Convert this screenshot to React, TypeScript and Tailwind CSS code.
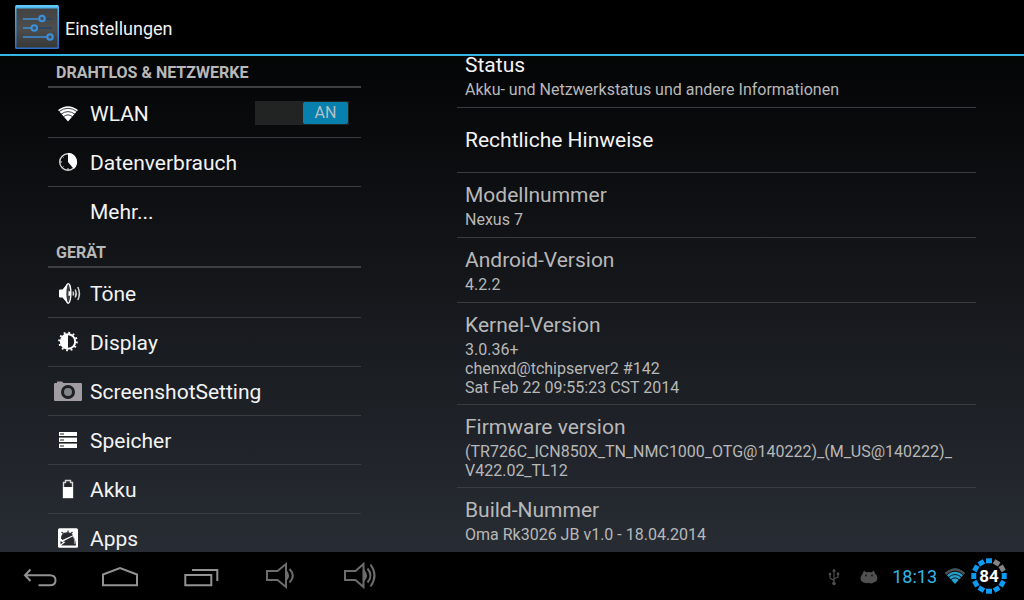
import { useState, type ReactNode } from "react";

type NavItem = {
  label: string;
  icon?: ReactNode;
  toggle?: boolean;
};

type NavSection = {
  title: string;
  items: NavItem[];
};

type InfoItem = {
  title: string;
  lines: string[];
  enabled?: boolean;
};

function WifiIcon() {
  return (
    <svg viewBox="0 0 28 28" className="h-7 w-7 shrink-0" aria-hidden="true">
      <path d="M4 11 Q14 3.4 24 11 L14 22.5Z" fill="#fff" />
      <g fill="none" stroke="#0a0b0d" strokeWidth="0.8">
        <path d="M5 12.6 Q14 6 23 12.6" />
        <path d="M7 15.2 Q14 10 21 15.2" />
        <path d="M9.5 17.7 Q14 14 18.5 17.7" />
      </g>
    </svg>
  );
}

function DataIcon() {
  return (
    <svg viewBox="0 0 28 28" className="h-7 w-7 shrink-0" aria-hidden="true">
      <circle cx="14" cy="14" r="8.3" fill="none" stroke="#d5d5d5" strokeWidth="1.4" />
      <path d="M14 14 V5 A9 9 0 0 1 19.8 20.9Z" fill="#fff" />
      <path d="M6 14h2M14 22v-2M8.3 8.3l1.2 1.2M8.3 19.7l1.2-1.2" stroke="#d5d5d5" strokeWidth="1" />
    </svg>
  );
}

function SoundIcon() {
  return (
    <svg viewBox="0 0 28 28" className="h-7 w-7 shrink-0" aria-hidden="true">
      <path d="M5 11.5 Q5 10.5 6 10.5 H8.5 L13.5 4.5 V24.5 L8.5 18.5 H6 Q5 18.5 5 17.5Z" fill="#fff" />
      <ellipse cx="14.3" cy="14.5" rx="2.6" ry="9.8" fill="#3a3c3f" stroke="#fff" strokeWidth="1.3" />
      <path d="M14.5 12 A2.5 2.5 0 0 1 14.5 17Z" fill="#fff" />
      <g fill="none" stroke="#d0d0d0" strokeWidth="1.5">
        <path d="M19 12.5 Q20 14.5 19 16.5" />
        <path d="M21.2 10.5 Q23.2 14.5 21.2 18.5" />
        <path d="M23.8 8 Q27 14.5 23.8 21" />
      </g>
    </svg>
  );
}

function DisplayIcon() {
  return (
    <svg viewBox="0 0 28 28" className="h-7 w-7 shrink-0" aria-hidden="true">
      <circle cx="14" cy="13.5" r="8.8" fill="none" stroke="#fff" strokeWidth="2" strokeDasharray="1.8 2.808" />
      <circle cx="14" cy="13.5" r="7.2" fill="none" stroke="#fff" strokeWidth="2" />
      <path d="M14 6.5 A7 7 0 0 0 14 20.5Z" fill="#fff" />
    </svg>
  );
}

function CameraIcon() {
  return (
    <svg viewBox="0 0 28 28" className="h-7 w-7 shrink-0" aria-hidden="true">
      <path d="M1 6 H3 V4.5 H8 L9.5 6 H27 Q28 6 28 7 V23 Q28 24 27 24 H1 Q0 24 0 23 V7 Q0 6 1 6Z" fill="#a09ca0" />
      <circle cx="14" cy="15" r="5.5" fill="#858585" stroke="#1d2024" strokeWidth="3" />
    </svg>
  );
}

function StorageIcon() {
  return (
    <svg viewBox="0 0 28 28" className="h-7 w-7 shrink-0" aria-hidden="true">
      <path d="M5 6h18v16H5z" fill="#77797c" />
      <path d="M5 6h18v4H5zM5 12h18v4H5zM5 18h18v4H5z" fill="#fff" />
      <path d="M5 10.5h18M5 16.5h18" stroke="#202428" strokeWidth="1" />
      <path d="M6 8h4M6 14h4M6 20h4" stroke="#202428" strokeWidth="1.2" />
    </svg>
  );
}

function BatteryIcon() {
  return (
    <svg viewBox="0 0 28 28" className="h-7 w-7 shrink-0" aria-hidden="true">
      <path d="M9.5 22.5 V7.5 H11.5 V5.5 H16.5 V7.5 H18.5 V22.5Z" fill="none" stroke="#d8d8d8" strokeWidth="1.4" />
      <path d="M9 12h10v11H9z" fill="#fff" />
    </svg>
  );
}

function AppsIcon() {
  return (
    <svg viewBox="0 0 28 28" className="h-7 w-7 shrink-0" aria-hidden="true">
      <rect x="4" y="4.3" width="20" height="19.5" rx="1.5" fill="#fff" />
      <path d="M9.5 9.5 L7.5 8 M14 9 L14 6.5 M17 9.5 L18.5 8" stroke="#272b30" strokeWidth="1.2" />
      <path d="M7 14.5 Q7 8.5 13 8.3 Q17.5 8.3 19 11.2 L8.5 16Z" fill="#272b30" />
      <path d="M9 17.5 L19 12.3 Q21.5 15 22 21.5 H7 L11.5 18Z" fill="#272b30" />
      <path d="M6.5 17 L9 18.5 L6.5 20.5Z" fill="#272b30" />
      <path d="M19 12 Q21 15 20.8 20" stroke="#d8d8d8" strokeWidth="0.7" fill="none" />
    </svg>
  );
}

const SECTIONS: NavSection[] = [
  {
    title: "DRAHTLOS & NETZWERKE",
    items: [
      { label: "WLAN", icon: <WifiIcon />, toggle: true },
      { label: "Datenverbrauch", icon: <DataIcon /> },
      { label: "Mehr..." },
    ],
  },
  {
    title: "GERÄT",
    items: [
      { label: "Töne", icon: <SoundIcon /> },
      { label: "Display", icon: <DisplayIcon /> },
      { label: "ScreenshotSetting", icon: <CameraIcon /> },
      { label: "Speicher", icon: <StorageIcon /> },
      { label: "Akku", icon: <BatteryIcon /> },
      { label: "Apps", icon: <AppsIcon /> },
    ],
  },
];

const INFO: InfoItem[] = [
  { title: "Status", lines: ["Akku- und Netzwerkstatus und andere Informationen"], enabled: true },
  { title: "Rechtliche Hinweise", lines: [], enabled: true },
  { title: "Modellnummer", lines: ["Nexus 7"] },
  { title: "Android-Version", lines: ["4.2.2"] },
  { title: "Kernel-Version", lines: ["3.0.36+", "chenxd@tchipserver2 #142", "Sat Feb 22 09:55:23 CST 2014"] },
  { title: "Firmware version", lines: ["(TR726C_ICN850X_TN_NMC1000_OTG@140222)_(M_US@140222)_", "V422.02_TL12"] },
  { title: "Build-Nummer", lines: ["Oma Rk3026 JB v1.0 - 18.04.2014"] },
];

function SettingsLogo() {
  return (
    <svg viewBox="0 0 44 44" className="h-11 w-11" aria-hidden="true">
      <defs>
        <linearGradient id="panel" x1="0" y1="0" x2="0" y2="1">
          <stop offset="0" stopColor="#424242" />
          <stop offset="0.5" stopColor="#4e4e4e" />
          <stop offset="1" stopColor="#383838" />
        </linearGradient>
        <linearGradient id="frame" x1="0" y1="0" x2="0" y2="1">
          <stop offset="0" stopColor="#4db8ee" />
          <stop offset="1" stopColor="#2a6fc4" />
        </linearGradient>
      </defs>
      <rect width="44" height="44" rx="1.5" fill="url(#frame)" />
      <rect x="1.5" y="3.5" width="41" height="39" fill="url(#panel)" />
      <path d="M1 1h42" stroke="#66cdf8" strokeWidth="1.5" />
      <g strokeWidth="1.5">
        <path d="M8 14h15M8 23h8M8 32h24" stroke="#3a90dc" />
        <path d="M30 14h7M23 23h14" stroke="#1f4468" />
      </g>
      <g fill="#4a4f55" stroke="#3a90dc" strokeWidth="2">
        <circle cx="27" cy="13.5" r="2.8" />
        <circle cx="19.3" cy="23" r="2.8" />
        <circle cx="35" cy="32" r="2.8" />
      </g>
    </svg>
  );
}

function Toggle({ label }: { label: string }) {
  const [on, setOn] = useState(true);

  return (
    <label className="relative mr-3 flex h-6 w-[94px] shrink-0 cursor-pointer bg-[#222323] p-px">
      <input
        type="checkbox"
        role="switch"
        aria-label={label}
        checked={on}
        onChange={(e) => setOn(e.target.checked)}
        className="sr-only"
      />
      <span
        className={
          on
            ? "ml-auto flex w-[45px] items-center justify-center rounded-xs bg-[#0780ae] text-base text-[#b4bfc4]"
            : "flex w-[45px] items-center justify-center rounded-xs bg-[#444] text-base text-[#b4bfc4]"
        }
      >
        {on ? "AN" : "AUS"}
      </span>
    </label>
  );
}

function NavList() {
  return (
    <nav>
      {SECTIONS.map((section) => (
        <section key={section.title}>
          <h2 className="mb-px flex h-8 items-center border-b-2 border-[#3d4043] px-2 pt-1 text-base font-bold text-[#b8b8b8]">
            {section.title}
          </h2>
          <ul>
            {section.items.map((item) => (
              <li key={item.label} className="flex items-center border-b border-[#3a3d40] last:border-transparent">
                <a href="#" className="flex h-12 grow items-center gap-2 pl-1.5 text-[21px] text-[#f3f3f3]">
                  {item.icon ?? <span className="w-7" />}
                  <span className="pt-1">{item.label}</span>
                </a>
                {item.toggle && <Toggle label={item.label} />}
              </li>
            ))}
          </ul>
        </section>
      ))}
    </nav>
  );
}

function InfoList() {
  return (
    <dl className="-mt-[13px]">
      {INFO.map((item) => (
        <div
          key={item.title}
          className={
            item.lines.length > 0
              ? "min-h-[65px] border-b border-[#3a3d40] px-2 pt-2 pb-[7px]"
              : "flex min-h-[65px] items-center border-b border-[#3a3d40] px-2"
          }
        >
          <dt
            className={
              item.enabled
                ? "text-[21px] leading-[29px] text-[#f3f3f3]"
                : "text-[21px] leading-[29px] text-[#b8b8b8]"
            }
          >
            {item.title}
          </dt>
          {item.lines.map((line) => (
            <dd key={line} className="text-base leading-[19px] text-[#b8b8b8]">
              {line}
            </dd>
          ))}
        </div>
      ))}
    </dl>
  );
}

function SystemBar() {
  return (
    <footer className="flex h-12 shrink-0 items-center justify-between bg-black">
      <div className="flex">
        <button type="button" aria-label="Zurück">
          <svg viewBox="0 0 80 48" className="h-12 w-20" fill="none" stroke="#929292" strokeWidth="2">
            <path d="M30.5 17.5 L25 23.2 L30.5 29 M25 23.2 H50 Q55.5 23.2 55.5 28.3 Q55.5 33.3 50 33.3 H38.5" />
          </svg>
        </button>
        <button type="button" aria-label="Startseite">
          <svg viewBox="0 0 80 48" className="h-12 w-20" fill="none" stroke="#929292" strokeWidth="2">
            <path d="M23 33.3 V22.5 L40 16 L57 22.5 V33.3Z" />
          </svg>
        </button>
        <button type="button" aria-label="Letzte Apps">
          <svg viewBox="0 0 80 48" className="h-12 w-20" fill="none" stroke="#929292" strokeWidth="2">
            <path d="M25.3 23h26v10.3h-26zM32 18h25.3v11" />
          </svg>
        </button>
        <button type="button" aria-label="Leiser">
          <svg viewBox="0 0 80 48" className="h-12 w-20" fill="none" stroke="#6c6c6c" strokeWidth="2">
            <path d="M27 19h10.5L46 12v23l-8.5-7H27z" />
            <path d="M46.5 19.5 Q49.5 23.5 46.5 27.5Z" fill="#6c6c6c" />
            <path d="M49.5 17 Q56 23.5 49.5 30.5" />
          </svg>
        </button>
        <button type="button" aria-label="Lauter">
          <svg viewBox="0 0 80 48" className="h-12 w-20" fill="none" stroke="#6c6c6c" strokeWidth="2">
            <path d="M25 19h10.5L43.5 12v23l-8-7H25z" />
            <path d="M44.5 19.5 Q47.5 23.5 44.5 27.5Z" fill="#6c6c6c" />
            <path d="M47.5 16.5 Q53.5 23.5 47.5 30.5M50.5 12.5 Q58.5 23.5 50.5 34.5" />
          </svg>
        </button>
      </div>

      <div className="flex items-center pr-4">
        <svg viewBox="0 0 12 18" className="mt-0.5 mr-5 h-[18px] w-3" fill="none" stroke="#505050" strokeWidth="1.2" aria-hidden="true">
          <path d="M6 3V15M6 12.5 L2 10V6.5M6 11 L10 9V6" />
          <g fill="#505050" stroke="none">
            <path d="M6 0.5l2 3H4z" />
            <circle cx="6" cy="15.5" r="1.8" />
            <circle cx="2" cy="6" r="1.3" />
            <path d="M8.8 4.5h2.4v2.4H8.8z" />
          </g>
        </svg>
        <svg viewBox="0 0 18 14" className="mt-0.5 mr-3.5 h-3.5 w-[18px]" aria-hidden="true">
          <path
            d="M2.5 4 L4 0.5 L6 2.2 Q9 1.6 11.5 2.2 L14 0.5 L15 3.5 Q17.5 5 17.5 8 Q17 12 13.5 12.5 L12 13.5 Q9 12.5 6.5 13.2 L3.5 12.5 Q0.6 11.5 0.5 8 Q0.8 5.5 2.5 4Z"
            fill="#505050"
          />
          <circle cx="6" cy="5.5" r="0.9" fill="#111" />
          <circle cx="12" cy="5.5" r="0.9" fill="#111" />
        </svg>
        <time className="mt-0.5 mr-2 text-lg text-[#33b5e5]">18:13</time>
        <svg viewBox="0 0 20 16" className="mr-[5px] h-4 w-5" aria-hidden="true">
          <path d="M0 5 Q10 -4 20 5 L10 16Z" fill="#2a9fcb" />
          <path d="M0 5 Q10 -4 20 5 L18.3 6.9 Q10 0 1.7 6.9Z" fill="#4c4c4c" />
          <g fill="none" stroke="#000" strokeWidth="0.8">
            <path d="M1.5 6.9 Q10 -0.5 18.5 6.9" />
            <path d="M3.5 9.3 Q10 3.7 16.5 9.3" />
            <path d="M5.8 11.7 Q10 8 14.2 11.7" />
          </g>
        </svg>
        <svg viewBox="0 0 38 38" className="h-[38px] w-[38px]" role="img" aria-label="Akku 84">
          <g fill="none" strokeWidth="5">
            {Array.from({ length: 12 }, (_, i) => (
              <path
                key={i}
                d="M16 3.8h6"
                stroke={i === 1 || i === 2 ? "#858585" : "#0a9cf5"}
                transform={`rotate(${i * 30} 19 19)`}
              />
            ))}
          </g>
          <text x="19" y="25" textAnchor="middle" fontSize="17" fontWeight="700" fill="#fff">
            84
          </text>
        </svg>
      </div>
    </footer>
  );
}

export default function App() {
  return (
    <div className="flex h-screen flex-col overflow-hidden bg-linear-to-b/srgb from-black to-[#2b3038] font-[Roboto,sans-serif]">
      <header className="flex h-14 shrink-0 items-center gap-1.5 border-b-2 border-[#33b5e5] bg-black pl-[15px]">
        <SettingsLogo />
        <h1 className="pt-1 text-lg text-[#f3f3f3]">Einstellungen</h1>
      </header>
      <main className="grid min-h-0 grow grid-cols-[313fr_519fr] gap-24 overflow-hidden px-12">
        <NavList />
        <InfoList />
      </main>
      <SystemBar />
    </div>
  );
}
